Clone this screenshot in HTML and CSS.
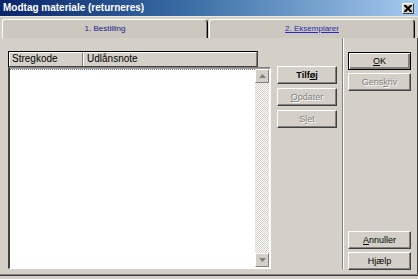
FILE: index.html
```html
<!DOCTYPE html>
<html>
<head>
<meta charset="utf-8">
<link rel="stylesheet" href="styles.css">
</head>
<body>
<div class="window">
  <div class="titlebar">
    <span class="title">Modtag materiale (returneres)</span>
    <span class="close"><svg width="8" height="7" viewBox="0 0 8 7"><path d="M0 0h2l2 2 2-2h2v1l-2.5 2.5L8 6v1H6L4 5 2 7H0V6l2.5-2.5L0 1z" fill="#000"/></svg></span>
  </div>
  <div class="tabstrip">
    <div class="tab tab1">1. Bestilling</div>
    <div class="tab tab2"><span class="link">2. Eksemplarer</span></div>
  </div>
  <div class="content">
    <div class="main">
      <div class="listcol">
        <div class="header">
          <div class="hcell c1">Stregkode</div>
          <div class="hcell c2">Udlånsnote</div>
        </div>
        <div class="listbody">
          <div class="rows"></div>
          <div class="scrollbar">
            <div class="sbtn"><svg width="7" height="4" viewBox="0 0 7 4"><path d="M3.5 0L7 4H0z" fill="#808080"/></svg></div>
            <div class="track"></div>
            <div class="sbtn"><svg width="7" height="4" viewBox="0 0 7 4"><path d="M0 0h7L3.5 4z" fill="#808080"/></svg></div>
          </div>
        </div>
      </div>
      <div class="btncol">
        <div class="btn bold">Tilf<u>ø</u>j</div>
        <div class="btn disabled"><u>O</u>pdater</div>
        <div class="btn disabled">S<u>l</u>et</div>
      </div>
    </div>
    <div class="sep"></div>
    <div class="side">
      <div class="btn default"><u>O</u>K</div>
      <div class="btn disabled">Gens<u>k</u>riv</div>
      <div class="spacer"></div>
      <div class="btn"><u>A</u>nnuller</div>
      <div class="btn">H<u>j</u>ælp</div>
    </div>
  </div>
  <div class="bottom"></div>
</div>
</body>
</html>
```
FILE: styles.css
```css
html, body {
  margin: 0;
  padding: 0;
}
body {
  width: 418px;
  height: 279px;
  overflow: hidden;
  background: #d4d0c8;
  font-family: "Liberation Sans", Arial, sans-serif;
}
.window {
  display: flex;
  flex-direction: column;
  width: 418px;
  height: 279px;
}
.titlebar {
  height: 16px;
  flex: none;
  display: flex;
  align-items: center;
  justify-content: space-between;
  background: linear-gradient(to right, #0a246a 0%, #3a6ea5 45%, #a6caf0 100%);
  padding: 0 4px 0 3px;
  box-sizing: border-box;
}
.title {
  color: #fff;
  font-weight: bold;
  font-size: 10px;
  line-height: 16px;
}
.close {
  width: 12px;
  height: 11px;
  box-sizing: border-box;
  background: #d4d0c8;
  border: 1px solid;
  border-color: #fff #404040 #404040 #fff;
  display: flex;
  align-items: center;
  justify-content: center;
  margin-top: 1px;
}
.tabstrip {
  height: 22px;
  flex: none;
  display: flex;
  padding: 2px 3px 0 2px;
  box-sizing: border-box;
  background: #d4d0c8;
  border-top: 1px solid #ece9e2;
}
.tab {
  flex: 1;
  box-sizing: border-box;
  background: #ccc8c0;
  border-top: 1px solid #fff;
  border-left: 1px solid #fff;
  border-right: 1px solid #000;
  border-radius: 3px 4px 0 0;
  box-shadow: inset -1px 0 #808080;
  font-size: 8px;
  display: flex;
  align-items: center;
  justify-content: center;
  padding-bottom: 2px;
}
.tab1 {
  color: #20208c;
  margin-right: 1px;
}
.link {
  color: #2a2ab4;
  text-decoration: underline;
}
.content {
  flex: 1;
  display: flex;
  border-right: 1px solid #404040;
}
.main {
  width: 342px;
  flex: none;
  display: flex;
  padding: 13px 0 0 8px;
  box-sizing: border-box;
}
.listcol {
  width: 263px;
  display: flex;
  flex-direction: column;
}
.header {
  width: 250px;
  height: 16px;
  box-sizing: border-box;
  display: flex;
  border: 1px solid;
  border-color: #000 #404040 #404040 #000;
  background: #d4d0c8;
}
.hcell {
  box-sizing: border-box;
  font-size: 10px;
  color: #000;
  line-height: 12px;
  padding-left: 2px;
  border-top: 1px solid #fff;
  border-left: 1px solid #fff;
  border-right: 1px solid #808080;
}
.c1 { width: 74px; }
.c2 { flex: 1; padding-left: 3px; }
.listbody {
  height: 202px;
  box-sizing: border-box;
  display: flex;
  background: #fff;
  border-top: 1px solid #808080;
  border-left: 2px solid #404040;
  border-bottom: 1px solid #fff;
  border-right: 1px solid #fff;
  box-shadow: inset 0 1px #a0a0a0;
}
.rows {
  flex: 1;
  border-top: 1px dotted #808080;
  margin-top: 1px;
}
.scrollbar {
  width: 14px;
  display: flex;
  flex-direction: column;
  padding: 1px 1px 1px 0;
}
.sbtn {
  height: 14px;
  box-sizing: border-box;
  background: #d4d0c8;
  border: 1px solid;
  border-color: #fff #808080 #808080 #fff;
  display: flex;
  align-items: center;
  justify-content: center;
}
.track {
  flex: 1;
  background: repeating-conic-gradient(#fff 0 25%, #d4d0c8 0 50%) 0 0 / 2px 2px;
}
.btncol {
  width: 60px;
  margin-left: 6px;
  padding-top: 15px;
  display: flex;
  flex-direction: column;
  gap: 4px;
}
.btn {
  height: 18px;
  box-sizing: border-box;
  background: #d4d0c8;
  border: 1px solid;
  border-color: #fff #404040 #404040 #fff;
  box-shadow: inset -1px -1px #808080;
  font-size: 9px;
  color: #000;
  display: flex;
  align-items: center;
  justify-content: center;
}
.btn.bold { font-weight: bold; }
.btn.default {
  border: 1px solid #000;
  box-shadow: inset 1px 1px #fff, inset -2px -2px #808080;
}
.btn.disabled {
  color: #808080;
  text-shadow: 1px 1px #fff;
}
.sep {
  width: 2px;
  flex: none;
  border-left: 1px solid #808080;
  border-right: 1px solid #fff;
  box-sizing: border-box;
  margin-bottom: 5px;
}
.side {
  flex: 1;
  display: flex;
  flex-direction: column;
  padding: 14px 6px 4px 4px;
  gap: 3px;
}
.spacer { flex: 1; }
.bottom {
  height: 5px;
  flex: none;
  border-top: 1px solid #808080;
  box-shadow: inset 0 1px #404040;
  box-sizing: border-box;
}
```
